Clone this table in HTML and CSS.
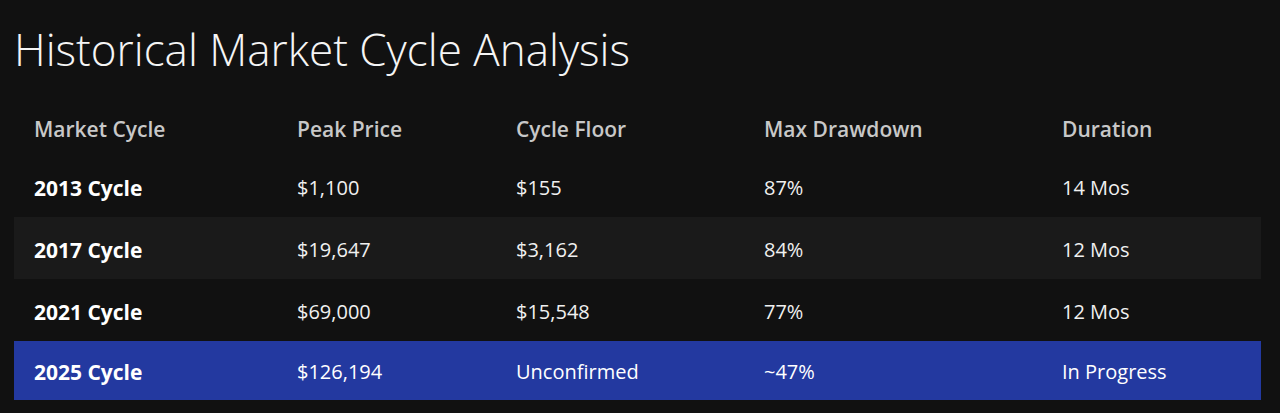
FILE: index.html
```html
<!DOCTYPE html>
<html>
<head>
<meta charset="utf-8">
<link rel="stylesheet" href="styles.css">
</head>
<body>
<div class="page">
  <h1 class="title">Historical Market Cycle Analysis</h1>
  <table class="cycles">
    <colgroup>
      <col class="c1"><col class="c2"><col class="c3"><col class="c4"><col class="c5">
    </colgroup>
    <thead>
      <tr><th>Market Cycle</th><th>Peak Price</th><th>Cycle Floor</th><th>Max Drawdown</th><th>Duration</th></tr>
    </thead>
    <tbody>
      <tr><td class="name">2013 Cycle</td><td>$1,100</td><td>$155</td><td>87%</td><td>14 Mos</td></tr>
      <tr class="alt"><td class="name">2017 Cycle</td><td>$19,647</td><td>$3,162</td><td>84%</td><td>12 Mos</td></tr>
      <tr><td class="name">2021 Cycle</td><td>$69,000</td><td>$15,548</td><td>77%</td><td>12 Mos</td></tr>
      <tr class="current"><td class="name">2025 Cycle</td><td>$126,194</td><td>Unconfirmed</td><td>~47%</td><td>In Progress</td></tr>
    </tbody>
  </table>
</div>
</body>
</html>
```
FILE: styles.css
```css
html, body {
  margin: 0;
  background: #111111;
}
body {
  font-family: "Open Sans", "Liberation Sans", sans-serif;
  color: #f2f2f2;
}
.page {
  padding: 22px 19px 0 14px;
}
.title {
  margin: 0;
  font-family: "Open Sans", sans-serif;
  font-weight: 300;
  font-size: 44px;
  line-height: 54px;
  color: #f5f5f5;
}
.cycles {
  margin-top: 24px;
  width: 1247px;
  border-collapse: collapse;
  table-layout: fixed;
}
.c1 { width: 263px; }
.c2 { width: 219px; }
.c3 { width: 248px; }
.c4 { width: 298px; }
.c5 { width: 219px; }
.cycles th {
  text-align: left;
  font-weight: 600;
  font-size: 21px;
  line-height: 28px;
  color: #c8c8c8;
  height: 52px;
  padding: 3px 20px 0;
  vertical-align: middle;
}
.cycles td {
  height: 59px;
  padding: 3px 20px 0;
  font-size: 20px;
  line-height: 28px;
  color: #f0f0f0;
  vertical-align: middle;
}
.cycles td.name {
  font-weight: 700;
  font-size: 21px;
  color: #ffffff;
}
.cycles tr.alt td {
  background: #1a1a1a;
}
.cycles tr.current td {
  background: #2339a0;
  height: 56px;
  color: #ffffff;
}
```
